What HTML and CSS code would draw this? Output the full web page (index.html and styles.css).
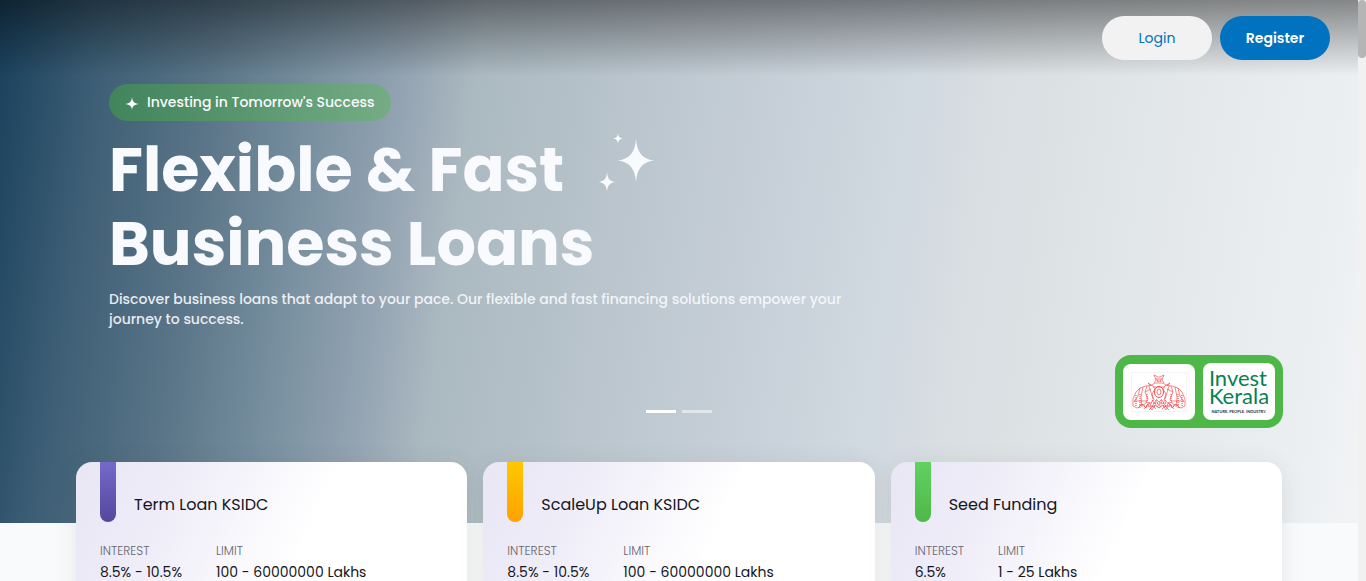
FILE: index.html
```
<!DOCTYPE html>
<html lang="en">
<head>
<meta charset="utf-8">
<meta name="viewport" content="width=device-width, initial-scale=1">
<title>Flexible &amp; Fast Business Loans</title>
<link rel="stylesheet" href="styles.css">
</head>
<body>
<div class="page">
  <header class="topbar">
    <a class="btn btn-light" href="#login">Login</a>
    <a class="btn btn-primary" href="#register">Register</a>
  </header>
  <section class="hero">
    <div class="hero-copy">
      <p class="badge">
        <svg class="badge-star" viewBox="0 0 14 14" aria-hidden="true"><path d="M7 1C7.500 5.500 9 7.300 14 8C9 8.700 7.500 10 7 14C6.500 10 5 8.700 0 8C5 7.300 6.500 5.500 7 1Z"/></svg>
        <span>Investing in Tomorrow's Success</span>
      </p>
      <div class="headline">
        <h1>Flexible &amp; Fast<br>Business Loans</h1>
        <svg class="sparkles" viewBox="0 0 56 60" aria-hidden="true">
          <path d="M37 6C38 19 43 26 55 27.500C43 29 38 36 37 49C36 36 31 29 19 27.500C31 26 36 19 37 6Z"/>
          <path d="M8 39C8.500 45 10 48 16 49C10 50 8.500 53 8 59C7.500 53 6 50 0 49C6 48 7.500 45 8 39Z"/>
          <path d="M19 0C19.300 3.500 20.500 5 24 5.500C20.500 6 19.300 7.500 19 11C18.700 7.500 17.500 6 14 5.500C17.500 5 18.700 3.500 19 0Z"/>
        </svg>
      </div>
      <p class="lead">Discover business loans that adapt to your pace. Our flexible and fast financing solutions empower your journey to success.</p>
    </div>
    <div class="hero-foot">
      <div class="slides">
        <button class="slide active" aria-label="Slide 1"></button>
        <button class="slide" aria-label="Slide 2"></button>
      </div>
      <div class="partners">
        <div class="partner">
          <svg class="emblem" viewBox="0 0 56 40" role="img" aria-label="Government of Kerala">
            <rect x="0.500" y="0.500" width="55" height="39" fill="none" stroke="#f4f4f4"/>
            <g fill="none" stroke="#f5383b" stroke-width="0.600" stroke-linejoin="round">
              <path d="M23 11L25 8L23 3L27 5H29L33 3L31 8L33 11M25 6L27 10M31 6L29 10M21 13L24 11H32L35 13M22 15H34M26 7H30M26 9H30"/>
              <path d="M21 13L15 14L9 16L5 20L2 27L2 34L6 36L10 35M35 13L41 14L47 16L51 20L54 27L54 34L50 36L46 35"/>
              <path d="M16 14L14 20L17 27L14 32L8 34M9 16L7 24L3 30M12 15L10 25L11 35M40 14L42 20L39 27L42 32L48 34M47 16L49 24L53 30M44 15L46 25L45 35"/>
              <path d="M20 14L17 11L22 14L24 17L21 22L23 28L18 32M36 14L39 11L34 14L32 17L35 22L33 28L38 32M14 20L20 17M42 20L36 17M3 29H15M41 29H53M18 14L22 27M38 14L34 27"/>
              <path d="M7 36L11 32L15 36L18 30L21 35L25 28L28 34L31 28L35 35L38 30L41 36L45 32L49 36"/>
              <path d="M13 37L17 32L21 38L24 33L28 36L32 33L35 38L39 32L43 37M18 38L22 34L25 37M38 38L34 34L31 37M25 27L28 30L31 27"/>
            </g>
            <g fill="none" stroke="#f5383b">
              <ellipse cx="28" cy="20" rx="4.500" ry="5.500" stroke-width="0.900"/>
              <ellipse cx="28" cy="20" rx="2" ry="3" stroke-width="0.700"/>
              <path stroke-dasharray="1 1" d="M5 23V35M9 22V34M16 22V32M21 28L28 36L35 28M40 22V32M47 22V34M51 23V35M13 34H24M32 34H43M20 31H36"/>
            </g>
          </svg>
        </div>
        <div class="partner invest">
          <span class="invest-name">Invest<br>Kerala</span>
          <span class="invest-tag">NATURE. PEOPLE. INDUSTRY.</span>
        </div>
      </div>
    </div>
  </section>
  <main class="cards">
    <article class="card">
      <div class="card-head"><span class="ribbon purple"></span><h2>Term Loan KSIDC</h2></div>
      <dl class="facts">
        <div><dt>INTEREST</dt><dd>8.5% - 10.5%</dd></div>
        <div><dt>LIMIT</dt><dd>100 - 60000000 Lakhs</dd></div>
      </dl>
    </article>
    <article class="card">
      <div class="card-head"><span class="ribbon amber"></span><h2>ScaleUp Loan KSIDC</h2></div>
      <dl class="facts">
        <div><dt>INTEREST</dt><dd>8.5% - 10.5%</dd></div>
        <div><dt>LIMIT</dt><dd>100 - 60000000 Lakhs</dd></div>
      </dl>
    </article>
    <article class="card">
      <div class="card-head"><span class="ribbon green"></span><h2>Seed Funding</h2></div>
      <dl class="facts">
        <div><dt>INTEREST</dt><dd>6.5%</dd></div>
        <div><dt>LIMIT</dt><dd>1 - 25 Lakhs</dd></div>
      </dl>
    </article>
  </main>
</div>
<div class="scrollbar" aria-hidden="true"><div class="thumb"></div></div>
</body>
</html>
```
FILE: styles.css
```
* { box-sizing: border-box; }
body, h1, h2, p, dl, dd { margin: 0; }
body {
  padding-right: 8px;
  font-family: Poppins, Inter, "Open Sans", sans-serif;
  background: #f9fafc;
  color: #14161c;
}
.page { position: relative; height: 100vh; overflow: hidden; }
.topbar {
  position: absolute;
  inset: 0 0 auto 0;
  display: flex;
  justify-content: flex-end;
  gap: 8px;
  padding: 16px 28px;
  background: linear-gradient(rgba(0, 0, 0, .44), rgba(0, 0, 0, 0));
}
.btn {
  width: 110px;
  border-radius: 22px;
  font-size: 14px;
  line-height: 44px;
  text-align: center;
  text-decoration: none;
}
.btn-light { background: #f2f2f2; color: #0072bf; }
.btn-primary { background: #0072bf; color: #fff; font-weight: 600; }
.hero {
  padding: 84px 75px 95px;
  background: linear-gradient(98deg, #183f5b 0%, #3b5d74 7%, #587386 15%, #7890a0 23%, #93a3b1 29%, #abb9c1 34%, #bfc9d1 49%, #d1d9e1 65%, #d8dee1 70%, #e4e8ea 84%, #ebeff2 95%, #f2f3f5 100%);
  color: #f9fafd;
}
.hero-copy { padding-left: 34px; }
.badge {
  display: flex;
  align-items: center;
  gap: 8px;
  width: fit-content;
  padding: 8px 16px;
  border-radius: 19px;
  background: linear-gradient(90deg, rgba(66, 154, 76, .62), rgba(100, 178, 106, .62));
  font-size: 14px;
  font-weight: 500;
  line-height: 21px;
}
.badge-star { width: 14px; height: 14px; fill: currentColor; }
.headline { display: flex; gap: 5px; margin-top: 12px; }
h1 { font-size: 62px; font-weight: 700; line-height: 74px; }
.sparkles { width: 56px; height: 60px; fill: currentColor; }
.lead {
  max-width: 750px;
  margin-top: 8px;
  font-size: 14px;
  font-weight: 500;
  line-height: 20px;
  opacity: .9;
}
.hero-foot {
  display: grid;
  grid-template-columns: 1fr auto 1fr;
  margin-top: 26px;
}
.slides { grid-column: 2; display: flex; align-items: flex-end; gap: 6px; padding-bottom: 15px; }
.slide { width: 30px; height: 3px; padding: 0; border: 0; background: #fff; opacity: .5; }
.slide.active { opacity: 1; }
.partners {
  justify-self: end;
  display: flex;
  align-items: flex-end;
  gap: 8px;
  padding: 8px;
  border-radius: 16px;
  background: #4db848;
}
.partner {
  display: flex;
  flex-direction: column;
  align-items: center;
  justify-content: center;
  width: 72px;
  height: 56px;
  border-radius: 8px;
  background: #fff;
}
.emblem { width: 56px; height: 40px; }
.invest { height: 57px; font-family: Lato, sans-serif; }
.invest-name { color: #087f55; font-size: 22px; line-height: 18px; }
.invest-tag { margin-top: 4px; color: #333; font-size: 4px; font-weight: 700; line-height: 6px; white-space: nowrap; }
.cards {
  position: relative;
  display: grid;
  grid-template-columns: repeat(3, 1fr);
  gap: 16px;
  margin: -61px 76px 0;
}
.card {
  padding: 0 24px 24px;
  border-radius: 16px;
  background: linear-gradient(115deg, #e9e6f5 0%, #efedf8 25%, #fff 58%);
  box-shadow: 0 4px 24px rgba(60, 70, 40, .1);
}
.card-head { display: flex; gap: 18px; }
.ribbon { width: 16px; height: 60px; border-radius: 0 0 8px 8px; }
.purple { background: linear-gradient(#7569cb, #54479b); }
.amber { background: linear-gradient(#ffc800, #ffa200); }
.green { background: linear-gradient(#62d162, #4db848); }
h2 { padding-top: 31px; font-size: 16px; font-weight: 400; line-height: 24px; }
.facts { display: flex; gap: 34px; margin-top: 20px; }
dt { color: #66666e; font-size: 12px; font-weight: 300; line-height: 18px; }
dd { font-size: 14px; line-height: 24px; }
.scrollbar { position: fixed; inset: 0 0 0 auto; width: 8px; background: #f1f1f1; }
.thumb { height: 58px; border-radius: 4px; background: #b5b5b5; }
```
